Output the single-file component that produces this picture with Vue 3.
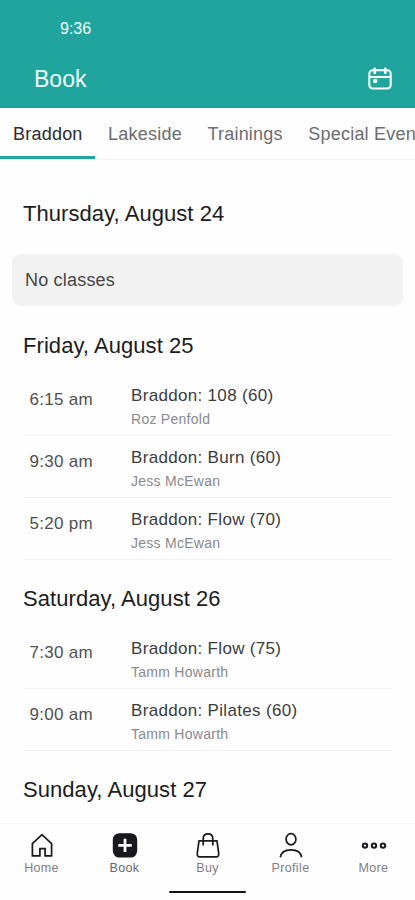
<script setup>
import { ref } from 'vue';

const tabs = ['Braddon', 'Lakeside', 'Trainings', 'Special Events'];
const activeTab = ref('Braddon');

const days = [
    { date: 'Thursday, August 24', classes: [] },
    {
        date: 'Friday, August 25',
        classes: [
            { time: '6:15 am', name: 'Braddon: 108 (60)', teacher: 'Roz Penfold' },
            { time: '9:30 am', name: 'Braddon: Burn (60)', teacher: 'Jess McEwan' },
            { time: '5:20 pm', name: 'Braddon: Flow (70)', teacher: 'Jess McEwan' }
        ]
    },
    {
        date: 'Saturday, August 26',
        classes: [
            { time: '7:30 am', name: 'Braddon: Flow (75)', teacher: 'Tamm Howarth' },
            { time: '9:00 am', name: 'Braddon: Pilates (60)', teacher: 'Tamm Howarth' }
        ]
    },
    { date: 'Sunday, August 27', classes: [] }
];

const navItems = ['Home', 'Book', 'Buy', 'Profile', 'More'];
</script>

<template>
    <div class="app">
        <header class="header">
            <div class="status">9:36</div>
            <div class="title-row">
                <h1 class="title">Book</h1>
                <svg class="calendar" viewBox="0 0 26 24" fill="none" stroke="currentColor" stroke-width="2.1">
                    <rect x="2.3" y="3.3" width="21.4" height="18.2" rx="3.5" />
                    <path d="M2.3 10h21.4" />
                    <path d="M7.7 1.8v4M18.3 1.8v4" stroke-width="2.8" stroke-linecap="round" />
                    <rect x="6.2" y="12" width="4" height="4" rx="1.2" fill="currentColor" stroke="none" />
                </svg>
            </div>
        </header>

        <nav class="tabs">
            <button
                v-for="tab in tabs"
                :key="tab"
                class="tab"
                :class="{ active: tab === activeTab }"
                @click="activeTab = tab"
            >{{ tab }}</button>
        </nav>

        <main class="schedule">
            <section v-for="(day, index) in days" :key="day.date" class="day">
                <h2 class="date">{{ day.date }}</h2>
                <div v-if="day.classes.length" class="classes">
                    <div v-for="item in day.classes" :key="item.time" class="row">
                        <div class="time">{{ item.time }}</div>
                        <div class="info">
                            <div class="name">{{ item.name }}</div>
                            <div class="teacher">{{ item.teacher }}</div>
                        </div>
                    </div>
                </div>
                <div v-else-if="index < days.length - 1" class="empty">No classes</div>
            </section>
        </main>

        <footer class="bottom">
            <div class="nav">
                <div v-for="item in navItems" :key="item" class="nav-item">
                    <svg class="icon" viewBox="0 0 28 28" fill="none" stroke="currentColor" stroke-width="1.7">
                        <path v-if="item === 'Home'" d="M4.4 12.6 14 3.6l9.6 9v12.2h-6.5v-7.2h-5.2v7.2H4.4z" />
                        <template v-else-if="item === 'Book'">
                            <rect x="1.8" y="2.2" width="24.4" height="24.4" rx="6.5" fill="currentColor" stroke="none" />
                            <path d="M14 7.7v13.4M7.3 14.4h13.4" stroke="#fff" stroke-width="2.8" />
                        </template>
                        <template v-else-if="item === 'Buy'">
                            <path d="M5 9.9h18l1.7 12.3q.4 3.6-2.5 3.6H5.8q-2.9 0-2.5-3.6z" stroke-linejoin="round" />
                            <path d="M9.2 14.4V7.9q0-5 4.8-5t4.8 5v6.5" />
                        </template>
                        <template v-else-if="item === 'Profile'">
                            <ellipse cx="14" cy="8.2" rx="4.9" ry="5.6" />
                            <path d="M3.4 26.4c.6-5.3 4.2-7.6 10.6-7.6s10 2.3 10.6 7.6" />
                        </template>
                        <template v-else>
                            <circle cx="5" cy="14.6" r="2.2" stroke-width="2" />
                            <circle cx="14" cy="14.6" r="2.2" stroke-width="2" />
                            <circle cx="23" cy="14.6" r="2.2" stroke-width="2" />
                        </template>
                    </svg>
                    <span class="label" :class="{ selected: item === 'Book' }">{{ item }}</span>
                </div>
            </div>
            <div class="home-bar"></div>
        </footer>
    </div>
</template>

<style>
body {
    margin: 0;
    overflow: hidden;
}
</style>

<style scoped>
.app {
    display: flex;
    flex-direction: column;
    width: 100%;
    height: 900px;
    overflow: hidden;
    background-color: #fefefe;
    font-family: "Liberation Sans", Arial, sans-serif;
}

.header {
    flex: none;
    height: 108px;
    background-color: #1fa59e;
    color: #f4fffd;
}

.status {
    padding: 20px 0 0 60px;
    font-size: 16px;
    line-height: 18px;
}

.title-row {
    display: flex;
    justify-content: space-between;
    align-items: center;
    height: 30px;
    margin-top: 26px;
    padding: 0 22px 0 34px;
}

.title {
    margin: 0;
    font-size: 23px;
    font-weight: normal;
    line-height: 30px;
}

.calendar {
    width: 26px;
    height: 24px;
}

.tabs {
    display: flex;
    flex: none;
    height: 51px;
    overflow: hidden;
    border-bottom: 1px solid #f3f3f3;
}

.tab {
    flex: none;
    padding: 4px 12.5px 0 13px;
    border: 0;
    border-bottom: 3px solid transparent;
    background: none;
    color: #6b6d70;
    font-family: inherit;
    font-size: 18px;
    letter-spacing: 0.22px;
}

.tab.active {
    border-bottom-color: #1fa59e;
    color: #2b2d2f;
}

.schedule {
    flex: 1;
    min-height: 0;
    overflow: hidden;
    padding-top: 38px;
}

.date {
    margin: 0;
    padding-left: 23px;
    color: #1c1c1e;
    font-size: 22px;
    font-weight: normal;
    line-height: 32px;
    letter-spacing: 0.06px;
}

.empty {
    height: 52px;
    margin: 24px 12px;
    padding-left: 13px;
    border-radius: 9px;
    background-color: #f2f2f2;
    color: #464648;
    font-size: 18px;
    line-height: 52px;
    letter-spacing: 0.2px;
}

.classes {
    margin: 12px 23px 23px;
}

.row {
    display: flex;
    box-sizing: border-box;
    height: 62px;
    border-bottom: 1px solid #f3f3f3;
}

.time {
    width: 108px;
    box-sizing: border-box;
    padding: 16px 0 0 6.5px;
    color: #505052;
    font-size: 17px;
    line-height: 20px;
    letter-spacing: 0.3px;
}

.info {
    padding-top: 12px;
}

.name {
    color: #3c3c3e;
    font-size: 17px;
    line-height: 20px;
    letter-spacing: 0.32px;
}

.teacher {
    margin-top: 4px;
    color: #8a8a8c;
    font-size: 14px;
    line-height: 18px;
    letter-spacing: 0.27px;
}

.bottom {
    flex: none;
    height: 76px;
    border-top: 1px solid #f4f4f4;
}

.nav {
    display: flex;
    height: 67px;
}

.nav-item {
    display: flex;
    flex: 1;
    flex-direction: column;
    align-items: center;
    padding-top: 7px;
    color: #18181e;
}

.icon {
    width: 28px;
    height: 28px;
}

.label {
    margin-top: 1px;
    color: #808083;
    font-size: 12.5px;
    line-height: 16px;
    letter-spacing: 0.35px;
}

.label.selected {
    color: #6a6a6c;
}

.home-bar {
    width: 77px;
    height: 2px;
    margin: 0 auto;
    border-radius: 1px;
    background-color: #151517;
}
</style>
